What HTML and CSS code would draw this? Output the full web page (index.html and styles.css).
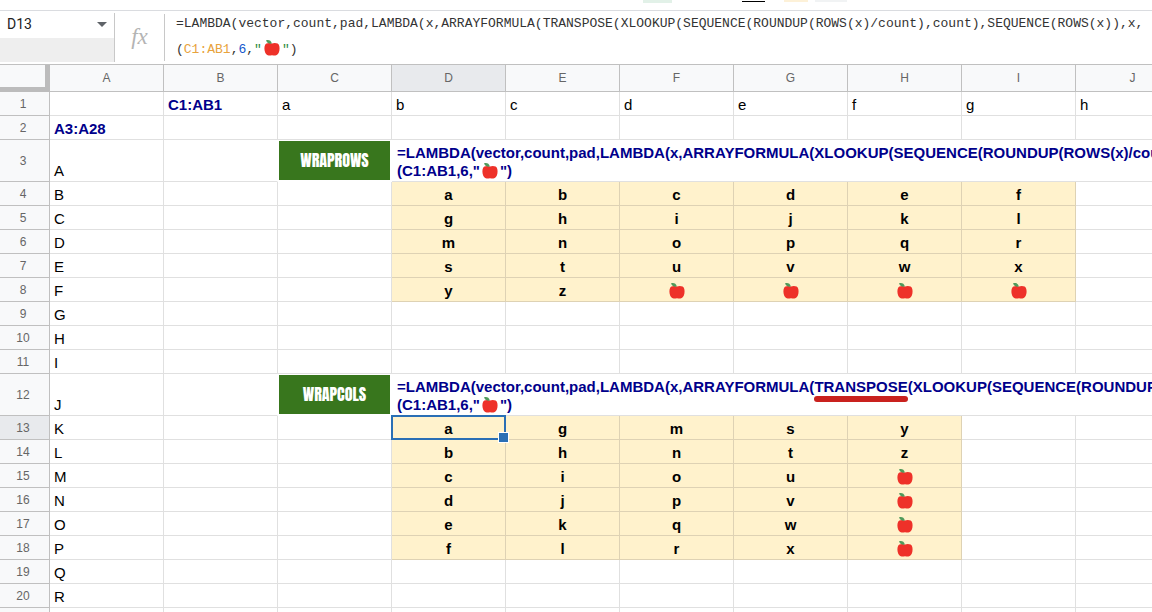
FILE: index.html
```html
<!DOCTYPE html>
<html lang="en">
<head>
  <meta charset="UTF-8" />
  <meta name="viewport" content="width=device-width, initial-scale=1.0"/>
  <title>WRAPROWS / WRAPCOLS</title>
  <link rel="stylesheet" href="styles.css">
</head>
<body>

  <svg class="sprite" aria-hidden="true">
    <symbol id="apple" viewBox="0 0 16 18">
      <path d="M8 4.600C9.500 3.700 12 3.700 13.600 4.600C15.400 5.700 15.900 8.500 15.400 11.500C14.900 14.400 13.400 16.400 11.400 16.600C10 16.700 9.100 16.300 8 16.300C6.900 16.300 6 16.700 4.600 16.600C2.600 16.400 1.100 14.400 .6 11.500C.1 8.500 .6 5.700 2.400 4.600C4 3.700 6.500 3.700 8 4.600Z" fill="#ee3129"/>
      <path d="M2 1.400C4.500 .6 7.200 1.400 7.800 4.600C5.200 5 3.200 4 2 1.400Z" fill="#4f9a5b"/>
    </symbol>
  </svg>

  <div class="toolbar">
    <span class="chip green"></span>
    <span class="chip line"></span>
    <span class="chip cream"></span>
    <span class="chip grey"></span>
  </div>

  <div class="formula-bar">
    <div class="name-box">
      <div class="name-row">
        <input type="text" value="D13" aria-label="Name box" />
        <button type="button" aria-label="Named ranges">
          <svg width="10" height="5" viewBox="0 0 10 5"><path d="M0 0H10L5 5Z" fill="#5f6368"/></svg>
        </button>
      </div>
    </div>
    <div class="fx">fx</div>
    <div class="formula" role="textbox" aria-label="Formula">=LAMBDA(vector,count,pad,LAMBDA(x,ARRAYFORMULA(TRANSPOSE(XLOOKUP(SEQUENCE(ROUNDUP(ROWS(x)/count),count),SEQUENCE(ROWS(x)),x,<br>(<span class="range">C1:AB1</span>,<span class="num">6</span>,<span class="str">"<svg class="apple"><use href="#apple"/></svg>"</span>)</div>
  </div>

  <div class="sheet">
    <table>
      <colgroup><col class="rows"><col span="10"></colgroup>
      <thead>
        <tr><th class="corner"></th><th>A</th><th>B</th><th>C</th><th class="active">D</th><th>E</th><th>F</th><th>G</th><th>H</th><th>I</th><th>J</th></tr>
      </thead>
      <tbody>
        <tr><th>1</th><td></td><td class="ref">C1:AB1</td><td>a</td><td>b</td><td>c</td><td>d</td><td>e</td><td>f</td><td>g</td><td>h</td></tr>
        <tr><th>2</th><td class="ref">A3:A28</td><td></td><td></td><td></td><td></td><td></td><td></td><td></td><td></td><td></td></tr>
        <tr class="tall">
          <th>3</th><td>A</td><td class="open"></td>
          <td class="label"><div>WRAPROWS</div></td>
          <td class="code" colspan="7">=LAMBDA(vector,count,pad,LAMBDA(x,ARRAYFORMULA(XLOOKUP(SEQUENCE(ROUNDUP(ROWS(x)/count)<br>(C1:AB1,6,"<svg class="apple"><use href="#apple"/></svg>")</td>
        </tr>
        <tr><th>4</th><td>B</td><td></td><td></td><td class="out">a</td><td class="out">b</td><td class="out">c</td><td class="out">d</td><td class="out">e</td><td class="out">f</td><td></td></tr>
        <tr><th>5</th><td>C</td><td></td><td></td><td class="out">g</td><td class="out">h</td><td class="out">i</td><td class="out">j</td><td class="out">k</td><td class="out">l</td><td></td></tr>
        <tr><th>6</th><td>D</td><td></td><td></td><td class="out">m</td><td class="out">n</td><td class="out">o</td><td class="out">p</td><td class="out">q</td><td class="out">r</td><td></td></tr>
        <tr><th>7</th><td>E</td><td></td><td></td><td class="out">s</td><td class="out">t</td><td class="out">u</td><td class="out">v</td><td class="out">w</td><td class="out">x</td><td></td></tr>
        <tr><th>8</th><td>F</td><td></td><td></td><td class="out">y</td><td class="out">z</td><td class="out"><svg class="apple"><use href="#apple"/></svg></td><td class="out"><svg class="apple"><use href="#apple"/></svg></td><td class="out"><svg class="apple"><use href="#apple"/></svg></td><td class="out"><svg class="apple"><use href="#apple"/></svg></td><td></td></tr>
        <tr><th>9</th><td>G</td><td></td><td></td><td></td><td></td><td></td><td></td><td></td><td></td><td></td></tr>
        <tr><th>10</th><td>H</td><td></td><td></td><td></td><td></td><td></td><td></td><td></td><td></td><td></td></tr>
        <tr><th>11</th><td>I</td><td></td><td></td><td></td><td></td><td></td><td></td><td></td><td></td><td></td></tr>
        <tr class="tall">
          <th>12</th><td>J</td><td class="open"></td>
          <td class="label"><div>WRAPCOLS</div></td>
          <td class="code" colspan="7">=LAMBDA(vector,count,pad,LAMBDA(x,ARRAYFORMULA(<span class="marked">TRANSPOSE</span>(XLOOKUP(SEQUENCE(ROUNDUP<br>(C1:AB1,6,"<svg class="apple"><use href="#apple"/></svg>")</td>
        </tr>
        <tr><th class="active">13</th><td>K</td><td></td><td></td><td class="out selected">a</td><td class="out">g</td><td class="out">m</td><td class="out">s</td><td class="out">y</td><td></td><td></td></tr>
        <tr><th>14</th><td>L</td><td></td><td></td><td class="out">b</td><td class="out">h</td><td class="out">n</td><td class="out">t</td><td class="out">z</td><td></td><td></td></tr>
        <tr><th>15</th><td>M</td><td></td><td></td><td class="out">c</td><td class="out">i</td><td class="out">o</td><td class="out">u</td><td class="out"><svg class="apple"><use href="#apple"/></svg></td><td></td><td></td></tr>
        <tr><th>16</th><td>N</td><td></td><td></td><td class="out">d</td><td class="out">j</td><td class="out">p</td><td class="out">v</td><td class="out"><svg class="apple"><use href="#apple"/></svg></td><td></td><td></td></tr>
        <tr><th>17</th><td>O</td><td></td><td></td><td class="out">e</td><td class="out">k</td><td class="out">q</td><td class="out">w</td><td class="out"><svg class="apple"><use href="#apple"/></svg></td><td></td><td></td></tr>
        <tr><th>18</th><td>P</td><td></td><td></td><td class="out">f</td><td class="out">l</td><td class="out">r</td><td class="out">x</td><td class="out"><svg class="apple"><use href="#apple"/></svg></td><td></td><td></td></tr>
        <tr><th>19</th><td>Q</td><td></td><td></td><td></td><td></td><td></td><td></td><td></td><td></td><td></td></tr>
        <tr><th>20</th><td>R</td><td></td><td></td><td></td><td></td><td></td><td></td><td></td><td></td><td></td></tr>
        <tr><th></th><td></td><td></td><td></td><td></td><td></td><td></td><td></td><td></td><td></td><td></td></tr>
      </tbody>
    </table>
  </div>

</body>
</html>
```
FILE: styles.css
```css
* {
  box-sizing: border-box;
}

body {
  margin: 0;
  height: 100vh;
  display: flex;
  flex-direction: column;
  overflow: hidden;
  background: #fff;
  color: #000;
  font-family: "Liberation Sans", Arial, sans-serif;
}

.sprite {
  position: absolute;
  width: 0;
  height: 0;
}

.apple {
  width: 16px;
  height: 18px;
  margin: 0 2px;
  vertical-align: -4px;
}

/* bottom edge of the toolbar */
.toolbar {
  flex: none;
  display: flex;
  height: 11px;
  padding-left: 643px;
  border-bottom: 1px solid #dadce0;
}

.chip {
  height: 2px;
}

.green {
  width: 29px;
  height: 3px;
  margin-right: 70px;
  background: #e2f1e8;
}

.line {
  width: 23px;
  margin-right: 19px;
  border-bottom: 1px solid #000;
}

.cream {
  width: 24px;
  margin-right: 7px;
  background: #fdf1d8;
}

.grey {
  width: 32px;
  background: #f1f3f4;
}

.formula-bar {
  flex: none;
  display: flex;
  height: 54px;
  border-bottom: 1px solid #c0c0c0;
}

.name-box {
  width: 115px;
  margin: 2px 0;
  border-right: 1px solid #c8c8c8;
  background: #eee;
}

.name-row {
  display: flex;
  align-items: center;
  height: 25px;
  padding-bottom: 3px;
  background: #fff;
}

.name-row input {
  flex: 1;
  min-width: 0;
  padding: 0 0 0 7px;
  border: none;
  outline: none;
  background: none;
  font: 14px Roboto, sans-serif;
  color: #222;
}

.name-row button {
  display: flex;
  padding: 0 7px;
  border: none;
  background: none;
  cursor: pointer;
}

.fx {
  width: 50px;
  margin: 3px 0;
  border-right: 1px solid #c8c8c8;
  font: italic 23px/46px "Liberation Serif", serif;
  text-align: center;
  color: #b4b4b4;
}

.formula {
  flex: 1;
  min-width: 0;
  padding-left: 11px;
  overflow: hidden;
  white-space: nowrap;
  font: 13px/26px "Liberation Mono", monospace;
  color: #333;
}

.range {
  color: #e8a33d;
}

.num {
  color: #1155cc;
}

.str {
  color: #2e8b3d;
}

.sheet {
  flex: 1;
  overflow: hidden;
}

table {
  width: 1190px;
  table-layout: fixed;
  border-collapse: separate;
  border-spacing: 0;
}

col {
  width: 114px;
}

col.rows {
  width: 50px;
}

th {
  padding: 0;
  border-right: 1px solid #c0c0c0;
  border-bottom: 1px solid #c0c0c0;
  background: #f8f9fa;
  font-size: 12px;
  font-weight: normal;
  color: #666;
}

thead th {
  height: 27px;
}

tbody th {
  padding-right: 3px;
}

th.corner {
  border-right: 5px solid #bcbcbc;
  border-bottom: 5px solid #bcbcbc;
}

th.active {
  background: #e8eaed;
}

td {
  height: 24px;
  padding: 0 4px 1px;
  border-right: 1px solid #e0e0e0;
  border-bottom: 1px solid #e0e0e0;
  vertical-align: bottom;
  white-space: nowrap;
  font-size: 15px;
  line-height: 18px;
}

.tall td {
  height: 42px;
}

.ref,
.code {
  font-weight: bold;
  color: #00008b;
}

td.code {
  padding-left: 5px;
  overflow: hidden;
}

td.open {
  border-right-color: #fff;
}

td.label {
  padding: 1px;
  border-color: #fff;
}

.label div {
  background: #38761d;
  color: #fff;
  font: 16px/39px Impact, Anton, "Liberation Sans Narrow", "Liberation Sans", sans-serif;
  text-align: center;
}

td.out {
  border-color: #ded2b4;
  background: #fff2cc;
  font-weight: bold;
  text-align: center;
}

.selected {
  position: relative;
}

/* active cell frame and its fill handle */
.selected::before {
  content: "";
  position: absolute;
  inset: -1px;
  border: 2px solid #2a6fb5;
}

.selected::after {
  content: "";
  position: absolute;
  right: -4px;
  bottom: -4px;
  width: 9px;
  height: 9px;
  border: 1px solid #fff;
  background: #2a6fb5;
  z-index: 1;
}

.marked {
  position: relative;
}

.marked::after {
  content: "";
  position: absolute;
  left: 0;
  right: 0;
  bottom: -7px;
  height: 6px;
  border-radius: 3px;
  background: #c9211e;
}
```
